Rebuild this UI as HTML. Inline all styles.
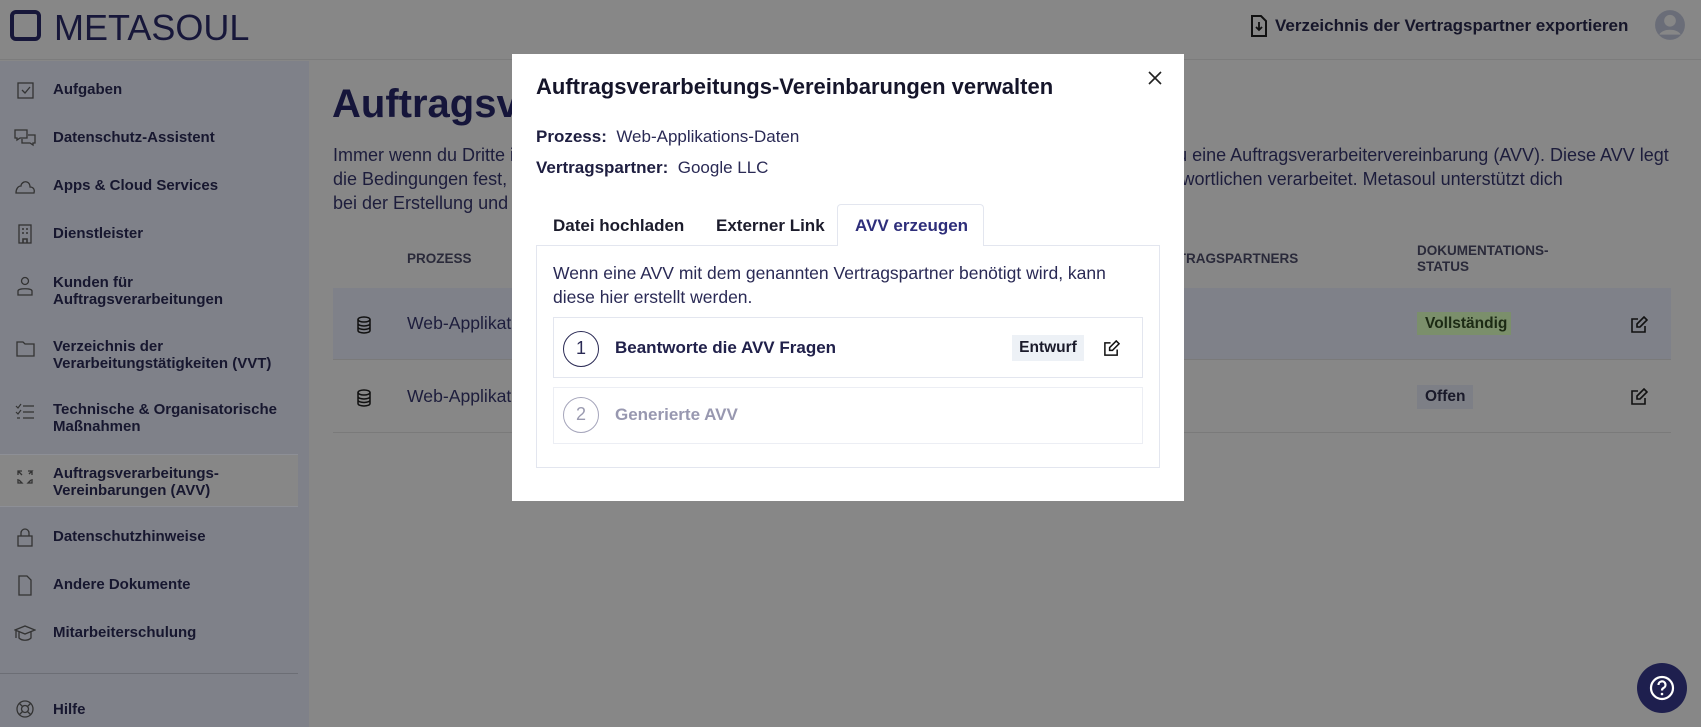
<!DOCTYPE html>
<html><head><meta charset="utf-8">
<style>
*{box-sizing:border-box;margin:0;padding:0}
body{width:1701px;height:727px;overflow:hidden;background:#878787;font-family:"Liberation Sans",Arial,sans-serif;color:#16162e;position:relative}
.abs{position:absolute}
.hdr{left:0;top:0;width:1701px;height:60px;background:#878787;border-bottom:1px solid #7c7c7c}
.side{left:0;top:61px;width:309px;height:666px;background:#7f8189}
.it{position:absolute;left:53px;font-size:15px;font-weight:bold;line-height:17px;color:#17172f}
.ic{position:absolute;left:14px;width:22px;height:22px}
.main{color:#1a1a3a}
.modal{left:512px;top:54px;width:672px;height:447px;background:#fff}
.tab{position:absolute;top:162px;font-size:17px;font-weight:bold;color:#1c1c2c;z-index:3}
</style></head><body>
<div class="abs hdr">
  <div class="abs" style="left:10px;top:10px;width:31px;height:31px;border:4px solid #17173a;border-radius:6px"></div>
  <div class="abs" style="left:54px;top:8px;font-size:36px;line-height:40px;color:#17173a">METASOUL</div>
  <svg class="abs" style="left:1250px;top:15px" width="18" height="22" viewBox="0 0 18 22"><path d="M2 1h9l5 5v15H2z" fill="none" stroke="#111" stroke-width="2"/><path d="M9 7v8M6 12l3 3 3-3" fill="none" stroke="#111" stroke-width="1.8"/></svg>
  <div class="abs" style="left:1275px;top:16px;font-size:17px;font-weight:bold;color:#16162a;white-space:nowrap">Verzeichnis der Vertragspartner exportieren</div>
  <svg class="abs" style="left:1654px;top:9px" width="32" height="32" viewBox="0 0 30 30"><circle cx="15" cy="15" r="14" fill="#6a6d78"/><circle cx="15" cy="11" r="5.5" fill="#878787"/><path d="M5 24c3-6 17-6 20 0" fill="#878787"/></svg>
</div>
<div class="abs side">
  <div class="abs" style="left:0;top:393px;width:298px;height:53px;background:#878787;border-top:1px solid #8d8f96;border-bottom:1px solid #8d8f96"></div>
  <div class="abs" style="left:0;top:612px;width:298px;height:1px;background:#6c6e75"></div>
  <svg class="ic" style="top:19px" viewBox="0 0 22 22"><rect x="4" y="3" width="15" height="15" fill="none" stroke="#333" stroke-width="1.3"/><path d="M8 10l3 3 5-6" fill="none" stroke="#333" stroke-width="1.3"/></svg>
  <div class="it" style="top:20px">Aufgaben</div>
  <svg class="ic" style="top:66px" viewBox="0 0 22 22"><path d="M1 3h12v8H6l-3 2v-2H1zM14 8h7v8h-2v2l-3-2H8v-4" fill="none" stroke="#333" stroke-width="1.3"/></svg>
  <div class="it" style="top:68px">Datenschutz-Assistent</div>
  <svg class="ic" style="top:114px" viewBox="0 0 22 22"><path d="M2 18h18c1-4-1-6-4-6 0-4-3-6-6-5-2 1-3 2-3 4-3 0-5 3-5 7z" fill="none" stroke="#333" stroke-width="1.3"/></svg>
  <div class="it" style="top:116px">Apps &amp; Cloud Services</div>
  <svg class="ic" style="top:162px" viewBox="0 0 22 22"><rect x="5" y="2" width="12" height="18" fill="none" stroke="#333" stroke-width="1.3"/><path d="M8 6h2M12 6h2M8 10h2M12 10h2M9 20v-4h4v4" stroke="#333" stroke-width="1.6" fill="none"/></svg>
  <div class="it" style="top:164px">Dienstleister</div>
  <svg class="ic" style="top:214px" viewBox="0 0 22 22"><circle cx="11" cy="6" r="3.5" fill="none" stroke="#333" stroke-width="1.3"/><path d="M4 20v-4c0-3 14-3 14 0v4z" fill="none" stroke="#333" stroke-width="1.3"/></svg>
  <div class="it" style="top:213px">Kunden für<br>Auftragsverarbeitungen</div>
  <svg class="ic" style="top:277px" viewBox="0 0 22 22"><path d="M3 4h6l2 2h9v12H3z" fill="none" stroke="#333" stroke-width="1.3"/></svg>
  <div class="it" style="top:277px">Verzeichnis der<br>Verarbeitungstätigkeiten (VVT)</div>
  <svg class="ic" style="top:340px" viewBox="0 0 22 22"><path d="M9 5h11M9 11h11M9 17h11M2 5l2 2 3-4M2 11l2 2 3-4M3 17h3" fill="none" stroke="#333" stroke-width="1.2"/></svg>
  <div class="it" style="top:340px">Technische &amp; Organisatorische<br>Maßnahmen</div>
  <svg class="ic" style="top:405px" viewBox="0 0 22 22"><path d="M4 9V5h4M4 5l4 4M18 9V5h-4M14 5h4l-3 3M4 13v4h4l-3-3M18 13v4h-4l3-3" fill="none" stroke="#333" stroke-width="1.3"/></svg>
  <div class="it" style="top:404px">Auftragsverarbeitungs-<br>Vereinbarungen (AVV)</div>
  <svg class="ic" style="top:465px" viewBox="0 0 22 22"><rect x="4" y="10" width="14" height="10" fill="none" stroke="#333" stroke-width="1.3"/><path d="M7 10V7a4 4 0 0 1 8 0v3" fill="none" stroke="#333" stroke-width="1.3"/></svg>
  <div class="it" style="top:467px">Datenschutzhinweise</div>
  <svg class="ic" style="top:513px" viewBox="0 0 22 22"><path d="M5 2h8l4 4v15H5z" fill="none" stroke="#333" stroke-width="1.3"/></svg>
  <div class="it" style="top:515px">Andere Dokumente</div>
  <svg class="ic" style="top:561px" viewBox="0 0 22 22"><path d="M1 8l10-4 10 4-10 4zM5 10v6c3 3 9 3 12 0v-6M2 9v7" fill="none" stroke="#333" stroke-width="1.3"/></svg>
  <div class="it" style="top:563px">Mitarbeiterschulung</div>
  <svg class="ic" style="top:637px" viewBox="0 0 22 22"><circle cx="11" cy="11" r="8" fill="none" stroke="#333" stroke-width="1.3"/><circle cx="11" cy="11" r="3.5" fill="none" stroke="#333" stroke-width="1.3"/><path d="M5 5l4 4M17 5l-4 4M5 17l4-4M17 17l-4-4" stroke="#333" stroke-width="1.3"/></svg>
  <div class="it" style="top:640px">Hilfe</div>
</div>
<div class="main">
  <div class="abs" style="left:332px;top:82px;font-size:40px;font-weight:bold;color:#15153a;white-space:nowrap">Auftragsverarbeitungs-Vereinbarungen</div>
  <div class="abs" style="left:333px;top:143px;white-space:nowrap;font-size:18px;line-height:24px;color:#1d1d3c">Immer wenn du Dritte im Rahmen deiner Tätigkeit personenbezogene Daten verarbeiten lässt, benötigst du eine Auftragsverarbeitervereinbarung (AVV). Diese AVV legt<br>die Bedingungen fest, unter denen der Dienstleister Daten im Auftrag des für die Datenverarbeitung Verantwortlichen verarbeitet. Metasoul unterstützt dich<br>bei der Erstellung und Verwaltung deiner AVV.</div>
  <div class="abs" style="left:407px;top:251px;font-size:13.5px;font-weight:bold;color:#2a2a3a">PROZESS</div>
  <div class="abs" style="left:1150px;top:251px;font-size:13.5px;font-weight:bold;color:#2a2a3a">VERTRAGSPARTNERS</div>
  <div class="abs" style="left:1417px;top:243px;font-size:13.5px;line-height:16px;font-weight:bold;color:#2a2a3a">DOKUMENTATIONS-<br>STATUS</div>
  <div class="abs" style="left:333px;top:288px;width:1338px;height:72px;background:#7f8189;border-bottom:1px solid #7a7a7a"></div>
  <div class="abs" style="left:333px;top:432px;width:1338px;height:1px;background:#7a7a7a"></div>
  <svg class="abs" style="left:356px;top:316px" width="16" height="18" viewBox="0 0 16 18"><ellipse cx="8" cy="3.5" rx="6" ry="2.5" fill="none" stroke="#111" stroke-width="1.5"/><path d="M2 3.5v11c0 3.3 12 3.3 12 0v-11M2 7.5c0 3.3 12 3.3 12 0M2 11c0 3.3 12 3.3 12 0" fill="none" stroke="#111" stroke-width="1.5"/></svg>
  <svg class="abs" style="left:356px;top:389px" width="16" height="18" viewBox="0 0 16 18"><ellipse cx="8" cy="3.5" rx="6" ry="2.5" fill="none" stroke="#111" stroke-width="1.5"/><path d="M2 3.5v11c0 3.3 12 3.3 12 0v-11M2 7.5c0 3.3 12 3.3 12 0M2 11c0 3.3 12 3.3 12 0" fill="none" stroke="#111" stroke-width="1.5"/></svg>
  <div class="abs" style="left:407px;top:313px;font-size:17.6px;color:#1d1d3c">Web-Applikations-Daten</div>
  <div class="abs" style="left:407px;top:386px;font-size:17.6px;color:#1d1d3c">Web-Applikations-Daten</div>
  <div class="abs" style="left:1417px;top:312px;width:94px;height:23px;background:#7b8f6b;font-size:15.5px;font-weight:bold;line-height:23px;padding-left:8px;color:#1c2a14">Vollständig</div>
  <div class="abs" style="left:1417px;top:385px;width:56px;height:24px;background:#7d7f86;font-size:15.5px;font-weight:bold;line-height:24px;padding-left:8px;color:#1a1a2a">Offen</div>
  <svg class="abs" style="left:1630px;top:316px" width="18" height="18" viewBox="0 0 18 18"><path d="M8 3H2v13h13v-6M14 1l3 3-7 7H7V8z" fill="none" stroke="#111" stroke-width="1.6"/></svg>
  <svg class="abs" style="left:1630px;top:388px" width="18" height="18" viewBox="0 0 18 18"><path d="M8 3H2v13h13v-6M14 1l3 3-7 7H7V8z" fill="none" stroke="#111" stroke-width="1.6"/></svg>
</div>
<div class="abs" style="left:1637px;top:663px;width:50px;height:50px;border-radius:50%;background:#1e1f4e"></div>
<svg class="abs" style="left:1648px;top:674px" width="28" height="28" viewBox="0 0 28 28"><circle cx="14" cy="14" r="11" fill="none" stroke="#fff" stroke-width="2.2"/><path d="M10.5 11a3.5 3.5 0 1 1 5 3c-1 .5-1.5 1-1.5 2.5" fill="none" stroke="#fff" stroke-width="2.2"/><circle cx="14" cy="20" r="1.3" fill="#fff"/></svg>

<div class="abs modal">
  <div class="abs" style="left:24px;top:20px;font-size:22px;font-weight:bold;color:#15152a;white-space:nowrap">Auftragsverarbeitungs-Vereinbarungen verwalten</div>
  <svg class="abs" style="left:636px;top:17px" width="14" height="14" viewBox="0 0 14 14"><path d="M1 1l12 12M13 1L1 13" stroke="#222" stroke-width="1.6"/></svg>
  <div class="abs" style="left:24px;top:73px;font-size:17px;color:#2a2a55"><b style="color:#1e1e40">Prozess:</b>&nbsp; Web-Applikations-Daten</div>
  <div class="abs" style="left:24px;top:104px;font-size:17px;color:#2a2a55"><b style="color:#1e1e40">Vertragspartner:</b>&nbsp; Google LLC</div>
  <div class="abs" style="left:24px;top:191px;width:624px;height:223px;border:1px solid #e3e6ef"></div>
  <div class="abs" style="left:325px;top:150px;width:147px;height:42px;border:1px solid #e3e6ef;border-bottom:none;border-radius:4px 4px 0 0;background:#fff;z-index:2"></div>
  <div class="tab" style="left:41px">Datei hochladen</div>
  <div class="tab" style="left:204px">Externer Link</div>
  <div class="tab" style="left:343px;color:#2e2e7a">AVV erzeugen</div>
  <div class="abs" style="left:41px;top:207px;width:580px;font-size:17.5px;line-height:24px;color:#2a2a55">Wenn eine AVV mit dem genannten Vertragspartner benötigt wird, kann diese hier erstellt werden.</div>
  <div class="abs" style="left:41px;top:263px;width:590px;height:61px;border:1px solid #e3e6ef"></div>
  <div class="abs" style="left:51px;top:277px;width:36px;height:36px;border:1.5px solid #2a2a55;border-radius:50%;text-align:center;line-height:33px;font-size:18px;color:#2a2a55">1</div>
  <div class="abs" style="left:103px;top:284px;font-size:17px;font-weight:bold;color:#20204a">Beantworte die AVV Fragen</div>
  <div class="abs" style="left:500px;top:281px;width:72px;height:26px;background:#edf1f6;font-size:15.5px;font-weight:bold;line-height:26px;text-align:center;color:#1a1a2a">Entwurf</div>
  <svg class="abs" style="left:591px;top:286px" width="17" height="17" viewBox="0 0 18 18"><path d="M8 3H2v13h13v-6M14 1l3 3-7 7H7V8z" fill="none" stroke="#111" stroke-width="1.6"/></svg>
  <div class="abs" style="left:41px;top:333px;width:590px;height:57px;border:1px solid #eceef4"></div>
  <div class="abs" style="left:51px;top:343px;width:36px;height:36px;border:1.5px solid #a5a5bb;border-radius:50%;text-align:center;line-height:33px;font-size:18px;color:#9a9ab0">2</div>
  <div class="abs" style="left:103px;top:351px;font-size:17px;font-weight:bold;color:#9898b0">Generierte AVV</div>
</div>
</body></html>
